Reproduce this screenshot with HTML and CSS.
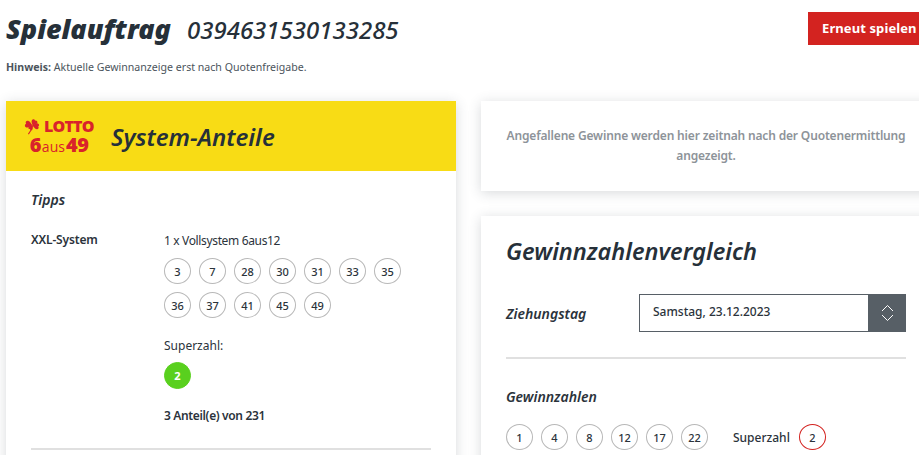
FILE: index.html
```html
<!DOCTYPE html>
<html lang="de">
<head>
<meta charset="utf-8">
<title>Spielauftrag</title>
<link rel="stylesheet" href="styles.css">
</head>
<body>
<div class="page">
  <header class="top">
    <div class="top-row">
      <h1 class="title"><span class="title-word">Spielauftrag</span><span class="title-num">0394631530133285</span></h1>
      <a class="replay">Erneut spielen</a>
    </div>
    <p class="hint"><b>Hinweis:</b> Aktuelle Gewinnanzeige erst nach Quotenfreigabe.</p>
  </header>
  <main class="cols">
    <section class="card left">
      <div class="banner">
        <div class="logo">
          <div class="logo-line1">
            <svg class="clover" viewBox="0 0 18 16" width="18" height="16"><g fill="#d9232b"><path transform="translate(9.500 6.500) rotate(28)" d="M0 0C-1.200-1.600-3-2.400-3-4.400-3-6-1-6.600 0-5.400 1-6.600 3-6 3-4.400 3-2.400 1.200-1.600 0 0Z"/><path transform="translate(9.500 6.500) rotate(100)" d="M0 0C-1.200-1.700-3-2.600-3-4.800-3-6.500-1-7 0-5.800 1-7 3-6.500 3-4.800 3-2.600 1.200-1.700 0 0Z"/><path transform="translate(9.500 6.500) rotate(215) scale(.75)" d="M0 0C-1.200-1.700-3-2.600-3-4.800-3-6.500-1-7 0-5.800 1-7 3-6.500 3-4.800 3-2.600 1.200-1.700 0 0Z"/><path transform="translate(9.500 6.500) rotate(285) scale(1.150)" d="M0 0C-1.200-1.700-3-2.600-3-4.800-3-6.500-1-7 0-5.800 1-7 3-6.500 3-4.800 3-2.600 1.200-1.700 0 0Z"/></g><path fill="none" stroke="#d9232b" stroke-width="1.200" d="M9.500 6.500C9 9.500 7.600 12.500 5.400 15.200"/></svg>
            <span class="logo-lotto">LOTTO</span>
          </div>
          <div class="logo-line2"><b>6</b><span class="logo-aus">aus</span><b>49</b></div>
        </div>
        <h2 class="banner-title">System-Anteile</h2>
      </div>
      <div class="left-body">
        <h3 class="sub">Tipps</h3>
        <div class="tip">
          <div class="tip-name">XXL-System</div>
          <div class="tip-data">
            <div class="tip-line tip-first">1 x Vollsystem 6aus12</div>
            <div class="balls grid-balls">
              <span class="ball">3</span><span class="ball">7</span><span class="ball">28</span><span class="ball">30</span><span class="ball">31</span><span class="ball">33</span><span class="ball">35</span>
              <span class="ball">36</span><span class="ball">37</span><span class="ball">41</span><span class="ball">45</span><span class="ball">49</span>
            </div>
            <div class="tip-line super-label">Superzahl:</div>
            <span class="ball ball-green">2</span>
            <div class="shares">3 Anteil(e) von 231</div>
          </div>
        </div>
        <hr class="rule">
      </div>
    </section>
    <div class="right">
      <section class="card notice"><p class="notice-text">Angefallene Gewinne werden hier zeitnah nach der Quotenermittlung angezeigt.</p></section>
      <section class="card compare">
        <h2 class="compare-title">Gewinnzahlenvergleich</h2>
        <div class="draw-row">
          <span class="draw-label">Ziehungstag</span>
          <div class="select">
            <span class="select-value">Samstag, 23.12.2023</span>
            <span class="select-btn">
              <svg viewBox="0 0 13 18" width="13" height="18"><path fill="none" stroke="#fff" stroke-width="1" d="M1 7 6.500 1.500 12 7M1 11l5.500 5.500L12 11"/></svg>
            </span>
          </div>
        </div>
        <hr class="rule rule-compare">
        <h3 class="sub sub-win">Gewinnzahlen</h3>
        <div class="win-row">
          <div class="balls">
            <span class="ball">1</span><span class="ball">4</span><span class="ball">8</span><span class="ball">12</span><span class="ball">17</span><span class="ball">22</span>
          </div>
          <span class="super-word">Superzahl</span>
          <span class="ball ball-red">2</span>
        </div>
      </section>
    </div>
  </main>
</div>
</body>
</html>
```

FILE: styles.css
```css
* { box-sizing: border-box; }
html, body { margin: 0; height: 455px; overflow: hidden; background: #fff; }
body { font-family: "Noto Sans", "Open Sans", sans-serif; color: #2b333b; font-size: 12px; }
.page { width: 919px; height: 455px; overflow: hidden; padding-left: 6px; }
.top-row { display: flex; justify-content: space-between; align-items: flex-start; padding-top: 11px; height: 55px; }
.title { margin: 0; display: flex; align-items: baseline; font-style: italic; line-height: 36px; color: #263039; }
.title-word { font-size: 27px; font-weight: 900; width: 181px; }
.title-num { font-size: 24px; font-weight: 500; }
.top-row .replay { margin-top: 1px; }
.replay { display: block; width: 111px; height: 33px; background: #d32320; color: #fff; font-weight: 700; font-size: 13px; line-height: 33px; padding-left: 14px; white-space: nowrap; letter-spacing: .1px; }
.hint { margin: 0; font-size: 10.600px; line-height: 14px; height: 46px; padding-top: 5px; color: #4b545c; }
.cols { display: flex; gap: 25px; align-items: flex-start; }
.card { background: #fff; box-shadow: 0 2px 12px rgba(60, 70, 80, .2); }
.left { width: 450px; height: 400px; flex: none; }
.banner { height: 70px; background: #f8dc15; display: flex; align-items: center; padding-left: 17px; }
.logo { width: 88px; color: #d9232b; flex: none; font-family: "Open Sans", sans-serif; }
.logo-line1 { display: flex; align-items: center; height: 17px; }
.clover { flex: none; margin-right: 3px; }
.logo-lotto { font-size: 16px; font-weight: 800; letter-spacing: -.8px; line-height: 17px; }
.logo-line2 { display: flex; align-items: baseline; justify-content: center; width: 72px; margin-top: 1px; line-height: 18px; height: 18px; }
.logo-line2 b { font-size: 20px; font-weight: 800; letter-spacing: -.5px; }
.logo-aus { font-size: 14px; font-weight: 400; margin: 0 1px; }
.banner-title { margin: 0; font-size: 24px; font-weight: 600; font-style: italic; color: #263039; }
.left-body { padding: 18px 25px 0; }
.sub { margin: 0; font-size: 14px; font-style: italic; font-weight: 600; line-height: 22px; }
.tip { display: flex; margin-top: 19px; }
.tip-name { width: 133px; flex: none; font-size: 12px; font-weight: 600; line-height: 20px; letter-spacing: -.15px; }
.tip-data { flex: 1; }
.tip-line { font-size: 12px; line-height: 20px; }
.tip-first { letter-spacing: -.35px; padding-top: 1px; height: 21px; }
.balls { display: flex; gap: 8px; }
.grid-balls { flex-wrap: wrap; margin-top: 7px; width: 250px; }
.ball { display: flex; align-items: center; justify-content: center; width: 27px; height: 26px; border: 1px solid #b8b8b8; border-radius: 50%; font-size: 11px; font-weight: 500; flex: none; background: #fff; }
.super-label { margin-top: 18px; }
.ball-green { width: 27px; height: 27px; margin-top: 6px; background: #59d01e; border-color: #59d01e; color: #fff; font-weight: 700; }
.shares { margin-top: 17px; font-size: 12px; font-weight: 600; line-height: 20px; letter-spacing: -.35px; }
.rule { border: 0; height: 2px; background: #e0e0e0; margin: 0; }
.left .rule { margin-top: 22px; }
.right { width: 500px; flex: none; display: flex; flex-direction: column; gap: 25px; }
.right .card { width: 500px; }
.notice { height: 90px; padding: 25px 25px 0; }
.notice-text { margin: 0; width: 400px; text-align: center; font-size: 12px; font-weight: 600; line-height: 20px; letter-spacing: -.16px; color: #8d9399; }
.compare { height: 300px; padding: 19px 25px 0; }
.compare-title { margin: 0; font-size: 23.500px; font-weight: 600; font-style: italic; line-height: 32px; color: #263039; }
.draw-row { display: flex; align-items: center; margin-top: 27px; width: 400px; }
.draw-label { width: 133px; font-size: 14px; font-weight: 600; font-style: italic; flex: none; }
.select { display: flex; flex: 1; height: 38px; border: 1px solid #575f66; }
.select-value { flex: 1; padding-left: 13px; line-height: 34px; font-size: 12px; font-weight: 500; }
.select-btn { width: 38px; margin: -1px -1px -1px 0; background: #575f66; display: flex; align-items: center; justify-content: center; }
.rule-compare { margin-top: 25px; width: 400px; }
.sub-win { margin-top: 27px; }
.win-row { display: flex; align-items: center; margin-top: 16px; }
.super-word { margin-left: 25px; margin-right: 9px; font-size: 12px; font-weight: 500; }
.ball-red { border-color: #d32320; }
```
